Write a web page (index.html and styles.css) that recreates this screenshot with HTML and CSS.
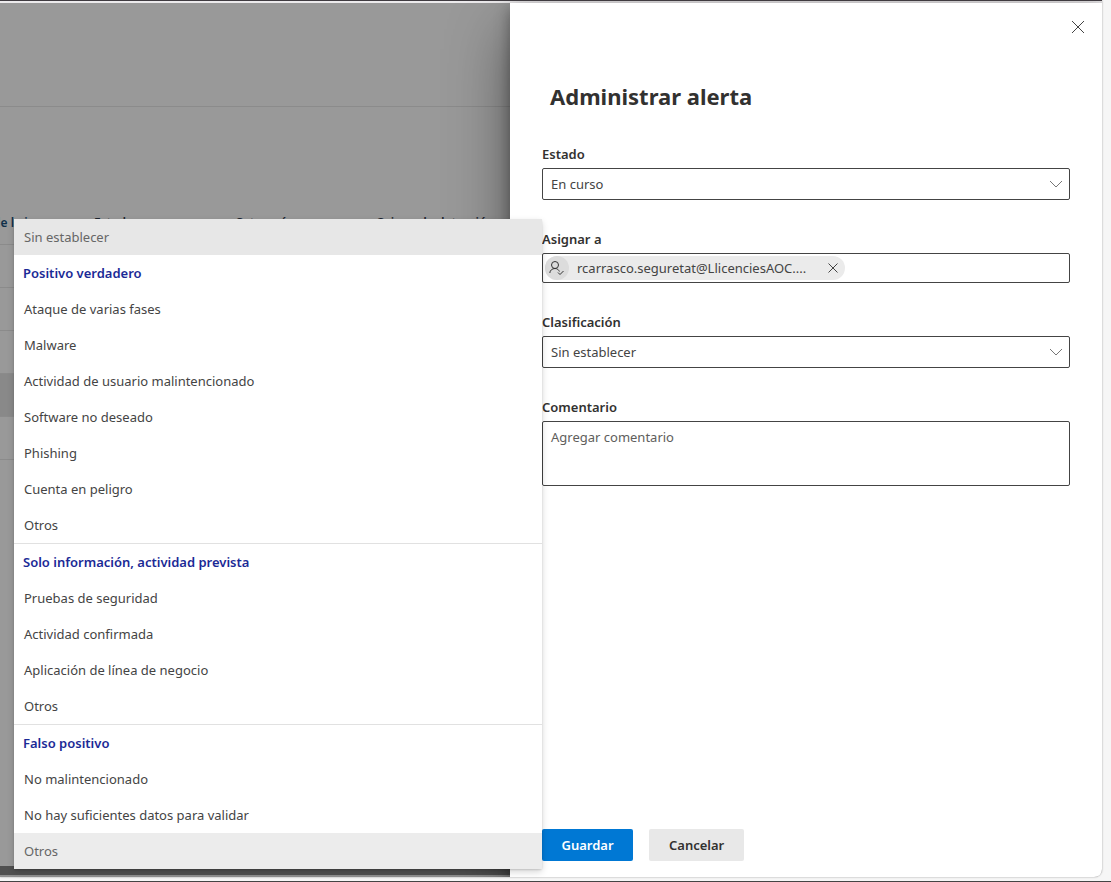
FILE: index.html
```html
<!DOCTYPE html>
<html lang="es">
<head>
<meta charset="utf-8">
<meta name="viewport" content="width=device-width, initial-scale=1">
<title>Administrar alerta</title>
<link rel="stylesheet" href="styles.css">
</head>
<body>
<div class="shell">
  <div class="page">
    <main class="backdrop">
      <div class="toolbar"></div>
      <table class="alerts">
        <thead>
          <tr><th>de la inv.</th><th>Estado</th><th>Categoría</th><th>Origen de detección</th></tr>
        </thead>
        <tbody>
          <tr><td colspan="4"></td></tr>
          <tr><td colspan="4"></td></tr>
          <tr><td colspan="4"></td></tr>
          <tr class="selected"><td colspan="4"></td></tr>
          <tr><td colspan="4"></td></tr>
        </tbody>
      </table>
      <div class="scrollbar"></div>
    </main>
    <aside class="panel" aria-labelledby="title">
      <button class="close" type="button" aria-label="Cerrar">
        <svg width="14" height="14" viewBox="0 0 14 14"><path d="M1 1l12 12M13 1L1 13"/></svg>
      </button>
      <form class="form">
        <h1 id="title">Administrar alerta</h1>
        <div class="field">
          <label for="status">Estado</label>
          <div class="select-wrap">
            <select id="status" class="box"><option>En curso</option></select>
            <svg class="chevron" width="14" height="8" viewBox="0 0 14 8"><path d="M1 1l6 6 6-6"/></svg>
          </div>
        </div>
        <div class="field">
          <label for="assignee">Asignar a</label>
          <div class="people box">
            <span class="chip">
              <span class="avatar"><svg width="16" height="16" viewBox="0 0 16 16"><circle cx="6" cy="5" r="3.500"/><path d="M.8 13c.2-2.600 2.300-4.500 5.200-4.500 2.200 0 3.600 1.200 4.400 3"/><path d="M9 12.500l2 2 3.500-3.500"/></svg></span>
              <span class="chip-text">rcarrasco.seguretat@LlicenciesAOC....</span>
              <button class="chip-remove" type="button" aria-label="Quitar"><svg width="10" height="10" viewBox="0 0 10 10"><path d="M.5.5l9 9M9.500.5l-9 9"/></svg></button>
            </span>
            <input id="assignee" type="text">
          </div>
        </div>
        <div class="field">
          <label for="classification">Clasificación</label>
          <div class="select-wrap">
            <select id="classification" class="box"><option>Sin establecer</option></select>
            <svg class="chevron" width="14" height="8" viewBox="0 0 14 8"><path d="M1 1l6 6 6-6"/></svg>
          </div>
        </div>
        <div class="field">
          <label for="comment">Comentario</label>
          <textarea id="comment" class="box" placeholder="Agregar comentario"></textarea>
        </div>
        <div class="actions">
          <button class="btn primary" type="submit">Guardar</button>
          <button class="btn" type="button">Cancelar</button>
        </div>
      </form>
    </aside>
  </div>
</div>
<div class="menu" role="listbox" aria-label="Clasificación">
  <button type="button" role="option" class="current">Sin establecer</button>
  <div class="group">
    <h2>Positivo verdadero</h2>
    <button type="button" role="option">Ataque de varias fases</button>
    <button type="button" role="option">Malware</button>
    <button type="button" role="option">Actividad de usuario malintencionado</button>
    <button type="button" role="option">Software no deseado</button>
    <button type="button" role="option">Phishing</button>
    <button type="button" role="option">Cuenta en peligro</button>
    <button type="button" role="option">Otros</button>
  </div>
  <div class="group">
    <h2>Solo información, actividad prevista</h2>
    <button type="button" role="option">Pruebas de seguridad</button>
    <button type="button" role="option">Actividad confirmada</button>
    <button type="button" role="option">Aplicación de línea de negocio</button>
    <button type="button" role="option">Otros</button>
  </div>
  <div class="group">
    <h2>Falso positivo</h2>
    <button type="button" role="option">No malintencionado</button>
    <button type="button" role="option">No hay suficientes datos para validar</button>
    <button type="button" role="option" class="hover">Otros</button>
  </div>
</div>
</body>
</html>
```

FILE: styles.css
```css
* { box-sizing: border-box; }
html, body { height: 100%; }
body {
  margin: 0;
  background: #f6f6f6;
  color: #323130;
  font: 13px/20px "Segoe UI", "Noto Sans", "Open Sans", sans-serif;
  overflow: hidden;
}
button, input, select, textarea { font: inherit; color: inherit; }
svg { fill: none; stroke: #444; display: block; }

.shell {
  min-height: 100vh;
  display: flex;
  padding: 0 9px 4px 0;
  border-bottom: 1px solid #444;
}
.page {
  flex: 1;
  display: flex;
  border-top: 1px solid #3f3b40;
  border-bottom-right-radius: 8px;
  box-shadow: 0 0 2px rgba(0, 0, 0, .4);
  padding-top: 2px;
  background: #eceaec;
  overflow: hidden;
}
.backdrop {
  flex: 1;
  min-width: 0;
  display: flex;
  flex-direction: column;
  background: #999;
  overflow: hidden;
}
.toolbar { height: 104px; flex: none; border-bottom: 1px solid #8b8b8b; }
.alerts {
  width: 100%;
  margin-top: 94px;
  table-layout: fixed;
  border-collapse: collapse;
}
.alerts th {
  height: 43px;
  padding: 1px 0 0;
  text-align: left;
  vertical-align: middle;
  font-size: 12px;
  font-weight: 600;
  line-height: 16px;
  white-space: nowrap;
  color: #1c2530;
  border-bottom: 1px solid #8b8b8b;
}
.alerts th:first-child { width: 94px; text-indent: -7px; color: #10304a; }
.alerts th:nth-child(2), .alerts th:nth-child(3) { width: 141px; }
.alerts td { height: 43px; padding: 0; border-bottom: 1px solid #8b8b8b; }
.alerts .selected td { background: #898989; }
.scrollbar {
  height: 11px;
  margin-top: auto;
  background: #505050;
  border-bottom: 2px solid #8f8f8f;
}

.panel {
  flex: none;
  width: 592px;
  display: flex;
  flex-direction: column;
  padding: 14px 12px 16px 32px;
  background: #fff;
  box-shadow: 0 26px 58px rgba(0, 0, 0, .44), 0 5px 14px rgba(0, 0, 0, .36);
}
.close {
  align-self: flex-end;
  display: grid;
  place-items: center;
  width: 24px;
  height: 20px;
  padding: 0;
  border: 0;
  background: none;
}
.form {
  flex: 1;
  display: flex;
  flex-direction: column;
  padding: 43px 20px 0 0;
}
h1 { margin: 0 0 32px 8px; font-size: 22px; line-height: 32px; font-weight: 700; }
.field { display: flex; flex-direction: column; margin-bottom: 29px; }
.field label { font-weight: 600; line-height: 20px; margin-bottom: 4px; }
.box {
  width: 100%;
  height: 32px;
  padding: 0 8px;
  border: 1px solid #444;
  border-radius: 2px;
  background: #fff;
  color: #444;
}
.select-wrap { display: grid; align-items: center; }
.select-wrap > * { grid-area: 1 / 1; }
select.box { appearance: none; }
.chevron { justify-self: end; margin-right: 7px; stroke: #777; pointer-events: none; }
.people { display: flex; align-items: center; height: 30px; padding: 0 2px; }
.people input { flex: 1; min-width: 0; border: 0; outline: 0; background: none; }
.chip {
  display: flex;
  align-items: center;
  width: 300px;
  height: 24px;
  border-radius: 12px;
  background: #ebebeb;
}
.avatar {
  display: grid;
  place-items: center;
  width: 24px;
  height: 24px;
  border-radius: 50%;
  background: #dcdcdc;
}
.avatar svg { stroke: #333; }
.chip-text { flex: 1; padding-left: 8px; white-space: nowrap; }
.chip-remove {
  display: grid;
  place-items: center;
  width: 24px;
  height: 24px;
  padding: 0;
  border: 0;
  background: none;
}
textarea.box { display: block; height: 65px; padding: 5px 8px; resize: none; }
textarea::placeholder { color: #605e5c; opacity: 1; }
.actions { display: flex; gap: 16px; margin-top: auto; }
.btn {
  height: 32px;
  min-width: 91px;
  padding: 0 20px;
  border: 0;
  border-radius: 2px;
  background: #e8e8e8;
  font-weight: 600;
}
.primary { padding: 0 16px; background: #0078d4; color: #fff; }

.menu {
  position: absolute;
  left: 14px;
  top: 219px;
  width: 528px;
  border-radius: 2px;
  background: #fff;
  box-shadow: 0 3px 7px rgba(0, 0, 0, .16), 0 1px 2px rgba(0, 0, 0, .14);
}
.menu button, .menu h2 {
  display: block;
  width: 100%;
  height: 36px;
  margin: 0;
  padding: 0 10px;
  border: 0;
  background: none;
  text-align: left;
  color: #444;
}
.menu h2 { padding: 0 9px; font-size: 13px; font-weight: 600; line-height: 36px; color: #1b2a96; }
.menu .current { background: #e7e7e7; color: #666; }
.menu .hover { background: #ececec; color: #666; }
.group + .group { border-top: 1px solid #e1e1e1; }
```
